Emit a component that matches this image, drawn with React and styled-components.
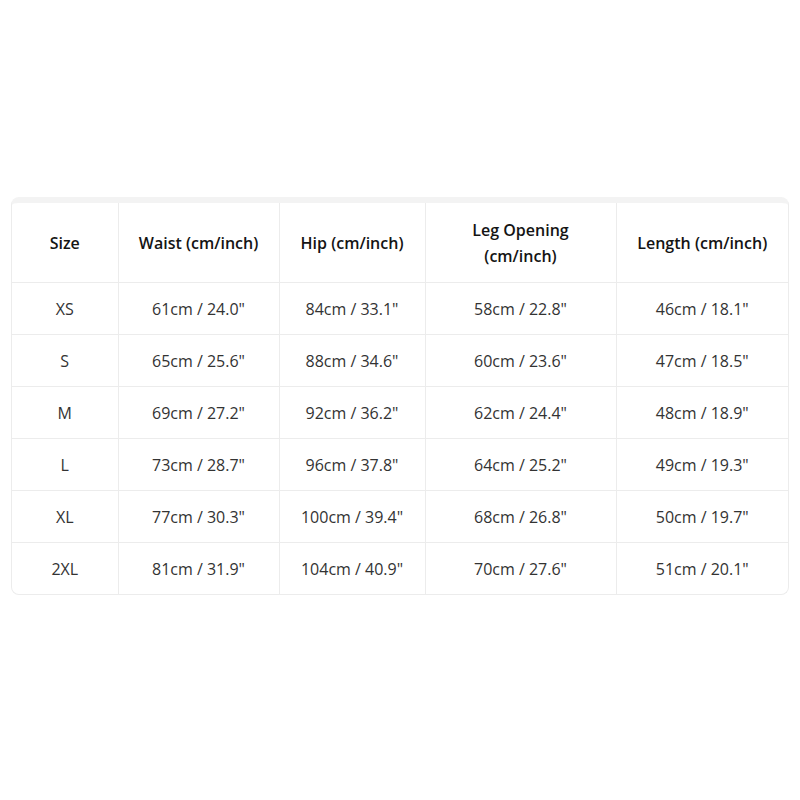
import React from "react";
import styled, { createGlobalStyle } from "styled-components";

const Global = createGlobalStyle`
  html, body { margin: 0; padding: 0; background: #ffffff; }
  body { font-family: "Open Sans", "Noto Sans", Arial, sans-serif; }
`;

const Page = styled.div`
  width: 800px;
  height: 800px;
  padding: 197px 11px 0 11px;
  box-sizing: border-box;
`;

const Card = styled.div`
  width: 778px;
  border: 1px solid #ececec;
  border-top: 6px solid #f3f3f3;
  border-radius: 8px;
  overflow: hidden;
  box-sizing: border-box;
`;

const Table = styled.table`
  width: 100%;
  border-collapse: collapse;
  table-layout: fixed;
`;

const Th = styled.th`
  height: 79px;
  padding: 0 8px;
  font-size: 16px;
  font-weight: 600;
  color: #141414;
  line-height: 26px;
  text-align: center;
  border-left: 1px solid #ececec;
  border-bottom: 1px solid #ececec;
  &:first-child { border-left: none; }
`;

const Td = styled.td`
  height: 51px;
  padding: 0 8px;
  font-size: 16px;
  font-weight: 400;
  color: #333333;
  text-align: center;
  border-left: 1px solid #ececec;
  border-bottom: 1px solid #ececec;
  &:first-child { border-left: none; }
  tr:last-child > & { border-bottom: none; }
`;

const cols = [106, 161, 146, 191, 172];
const headers = ["Size", "Waist (cm/inch)", "Hip (cm/inch)", "Leg Opening (cm/inch)", "Length (cm/inch)"];
const rows = [
  ["XS", '61cm / 24.0"', '84cm / 33.1"', '58cm / 22.8"', '46cm / 18.1"'],
  ["S", '65cm / 25.6"', '88cm / 34.6"', '60cm / 23.6"', '47cm / 18.5"'],
  ["M", '69cm / 27.2"', '92cm / 36.2"', '62cm / 24.4"', '48cm / 18.9"'],
  ["L", '73cm / 28.7"', '96cm / 37.8"', '64cm / 25.2"', '49cm / 19.3"'],
  ["XL", '77cm / 30.3"', '100cm / 39.4"', '68cm / 26.8"', '50cm / 19.7"'],
  ["2XL", '81cm / 31.9"', '104cm / 40.9"', '70cm / 27.6"', '51cm / 20.1"'],
];

const LegHead = styled.span`
  display: inline-block;
  width: 115px;
`;

export default function App() {
  return (
    <>
      <Global />
      <Page>
        <Card>
          <Table>
            <colgroup>
              {cols.map((w, i) => (
                <col key={i} style={{ width: w }} />
              ))}
            </colgroup>
            <thead>
              <tr>
                {headers.map((h, i) => (
                  <Th key={i}>{i === 3 ? <LegHead>{h}</LegHead> : h}</Th>
                ))}
              </tr>
            </thead>
            <tbody>
              {rows.map((r, i) => (
                <tr key={i}>
                  {r.map((c, j) => (
                    <Td key={j}>{c}</Td>
                  ))}
                </tr>
              ))}
            </tbody>
          </Table>
        </Card>
      </Page>
    </>
  );
}
